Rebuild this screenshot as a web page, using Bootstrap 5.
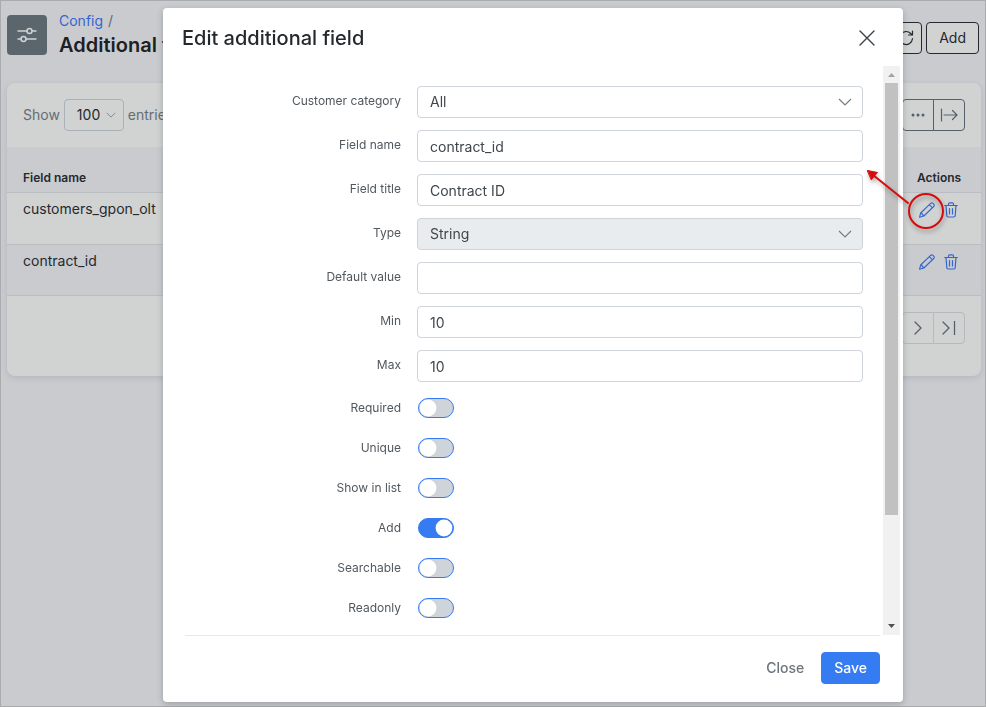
<!DOCTYPE html>
<html lang="en">
<head>
<meta charset="utf-8">
<meta name="viewport" content="width=device-width, initial-scale=1">
<title>Additional fields</title>
<link href="https://cdn.jsdelivr.net/npm/bootstrap@5.3.0/dist/css/bootstrap.min.css" rel="stylesheet">
<style>
body{font-family:Inter,"Liberation Sans",sans-serif;font-size:14px;line-height:20px;color:#25292e;background:#c9cbcf}
svg{display:block;fill:none;stroke:currentColor;stroke-linecap:round;stroke-linejoin:round}
.page{min-height:100vh;border:1px solid #a9abac;padding:14px 4px 16px 6px;overflow:hidden}
.page-icon{width:40px;height:40px;background:#5b656c;color:#d1d3d2;border-radius:4px}
.crumbs{--bs-breadcrumb-divider-color:#5f686f;--bs-breadcrumb-item-padding-x:5px;margin:-4px 0 2px;font-size:14px}
.crumbs a{color:#3565cf}
.page-title{font-size:20px;line-height:24px;font-weight:600;color:#1c1f24}
.top-actions{margin-top:7px;padding-right:2px}
.btn{font-size:14px;line-height:20px;padding:5px 12px;border-radius:4px}
.btn-top{--bs-btn-color:#25292e;--bs-btn-border-color:#25292e;background:#d1d3d2}
.btn-square{width:32px;height:32px;padding:0;display:flex;align-items:center;justify-content:center}
.btn-tool{--bs-btn-color:#56606a;--bs-btn-border-color:#56606a}
.btn-pager{--bs-btn-color:#56606a;--bs-btn-border-color:#b5babe}
.panel{background:#d1d3d2;border:0;border-radius:8px;margin-top:26px;box-shadow:0 2px 6px rgba(60,70,90,.15);overflow:hidden}
.form-select,.form-control{font-size:14px;line-height:20px;height:32px;padding:5px 12px;border-radius:4px;border-color:#ced4da;color:#3f464c}
.form-select{background-image:url("data:image/svg+xml,%3Csvg xmlns='http://www.w3.org/2000/svg' viewBox='0 0 14 8' fill='none' stroke='%23757d84' stroke-width='1.2'%3E%3Cpath d='M1 1l6 6 6-6'/%3E%3C/svg%3E");background-size:14px 8px;background-position:right 10px center}
.form-select:disabled{background-color:#e9ecef}
.length-select{width:60px;padding:5px 10px 5px 12px;background-color:transparent;border-color:#a9b1b7;color:#25292e;background-size:10px 6px;background-position:right 7px center}
.muted{color:#646d74}
.grid-table{--bs-table-bg:transparent;color:#25292e;margin:0}
.grid-table th{background:#c9cbcf;font-size:12px;line-height:16px;font-weight:600;padding:23px 16px 6px;border-color:#b9bec2}
.grid-table td{padding:6px 16px 4px;height:52px;border-color:#b9bec2}
.grid-table tr.alt td{background:#c9cbcf;height:51px}
.grid-table .col-act{width:80px}
.acts{padding:3px 0 0 1px}
.act{color:#3565cf;display:block}
.overlay{background:none;overflow:hidden}
.dialog{max-width:740px;margin:8px 83px 0 auto}
.sheet{border:0;border-radius:4px;box-shadow:0 2px 6px rgba(40,50,60,.28)}
.sheet-head{height:58px;padding:2px 24px 0 19px}
.sheet-title{font-size:20px;line-height:24px;font-weight:500;color:#25292e}
.x-btn{border:0;background:none;padding:0;color:#3b4146}
.field-list{padding:20px 20px 17px}
.field-row{display:grid;grid-template-columns:218fr 446fr;column-gap:16px;margin-bottom:12px}
.field-row label{font-size:12px;line-height:30px;color:#51585e;text-align:right}
.switch-row{align-items:center;height:20px;margin-bottom:20px}
.switch-row.first{margin-top:16px}
.switch-row:last-child{margin-bottom:0}
.switch-row label{line-height:20px}
.switch-row .form-check{padding:0 0 0 1px;margin:0;min-height:0}
.form-switch .form-check-input{float:none;display:block;width:36px;height:20px;margin:0;border-color:#357bf2;background-color:#ced4da;background-size:18px 18px;background-position:left 0 center;background-image:url("data:image/svg+xml,%3Csvg xmlns='http://www.w3.org/2000/svg' viewBox='0 0 18 18'%3E%3Ccircle cx='9' cy='9' r='8.4' fill='%23fff'/%3E%3C/svg%3E")}
.form-switch .form-check-input:checked{background-color:#357bf2;background-position:right 0 center;background-image:url("data:image/svg+xml,%3Csvg xmlns='http://www.w3.org/2000/svg' viewBox='0 0 18 18'%3E%3Ccircle cx='9' cy='9' r='8.4' fill='%23fff'/%3E%3C/svg%3E")}
.track{width:17px;margin-right:3px;background:#f1f1f1}
.track svg{width:17px;height:17px;stroke:none}
.thumb{width:13px;flex:432 0 0;background:#c1c1c1}
.track-rest{flex:103 0 0}
.sheet-foot{border-top:1px solid #e6e8ea;margin:0 23px 0 22px;padding:16px 0 18px}
.btn-save{--bs-btn-bg:#357bf2;--bs-btn-border-color:#357bf2;font-weight:500}
.btn-close-text{--bs-btn-color:#6c757d;font-weight:500;margin-right:4px}
.note{position:absolute;left:858px;top:160px;z-index:1060;pointer-events:none;stroke:#d60b0b;filter:drop-shadow(1px 3px 2px rgba(0,0,0,.3))}
</style>
<script src="https://cdn.jsdelivr.net/npm/bootstrap@5.3.0/dist/js/bootstrap.bundle.min.js"></script>
</head>
<body>
<main class="page">
  <header class="d-flex align-items-start">
    <div class="page-icon d-flex align-items-center justify-content-center me-2">
      <svg width="20" height="18" viewBox="0 0 20 18" stroke-width="1.5"><path d="M1 5h9M15.500 5H19M1 13h3M9 13h10"/><circle cx="12.500" cy="5" r="2.500"/><circle cx="6.500" cy="13" r="2.500"/></svg>
    </div>
    <div class="ms-1">
      <nav aria-label="breadcrumb"><ol class="breadcrumb crumbs"><li class="breadcrumb-item"><a href="#" class="text-decoration-none">Config</a></li><li class="breadcrumb-item" aria-hidden="true"></li></ol></nav>
      <h1 class="page-title m-0">Additional fields</h1>
    </div>
    <div class="d-flex gap-1 ms-auto top-actions">
      <button class="btn btn-top btn-square" aria-label="Refresh"><svg width="18" height="18" viewBox="0 0 18 18" stroke-width="1.200"><path d="M15.500 9.500A6.500 6.500 0 1 1 13.700 4.500L15 5.500M15.500 2v4H11.500"/></svg></button>
      <button class="btn btn-top">Add</button>
    </div>
  </header>

  <section class="card panel">
    <div class="d-flex align-items-center p-3">
      <label for="len" class="muted me-1">Show</label>
      <select id="len" class="form-select length-select me-1"><option>100</option></select>
      <span class="muted">entries</span>
      <div class="btn-group ms-auto">
        <button class="btn btn-tool btn-square" aria-label="More"><svg width="16" height="4" viewBox="0 0 16 4" stroke="none"><g fill="#56606a" stroke="none"><circle cx="3" cy="2" r="1.500"/><circle cx="8" cy="2" r="1.500"/><circle cx="13" cy="2" r="1.500"/></g></svg></button>
        <button class="btn btn-tool btn-square" aria-label="Export"><svg width="18" height="14" viewBox="0 0 18 14" stroke-width="1.200"><path d="M1.500 1v12M4 7h13M12.500 2.500L17 7l-4.500 4.500"/></svg></button>
      </div>
    </div>
    <table class="table grid-table">
      <thead><tr><th>Field name</th><th class="col-act">Actions</th></tr></thead>
      <tbody>
        <tr><td>customers_gpon_olt</td><td><div class="d-flex gap-2 acts">
          <a href="#" class="act" aria-label="Edit"><svg width="18" height="16" viewBox="0 0 18 16" stroke-width="1.100"><path d="M1.500 15.300l1.200-4.300L12.600 1.400a1.700 1.700 0 0 1 2.400 0l.7.7a1.700 1.700 0 0 1 0 2.400L5.900 14zM11.300 2.700l3 3M2.700 11l1.300.4.400 1.500 1.500.3"/></svg></a>
          <a href="#" class="act" aria-label="Delete"><svg width="14" height="16" viewBox="0 0 14 16" stroke-width="1.200"><path d="M.7 3.500h12.600M2 3.500l.8 10a1.500 1.500 0 0 0 1.400 1.500h5.600a1.500 1.500 0 0 0 1.400-1.500l.8-10M4.500 3.500V2A1.200 1.200 0 0 1 5.700.8h2.600A1.200 1.200 0 0 1 9.500 2v1.500M5.500 6.500v5.500M8.500 6.500v5.500"/></svg></a></div></td></tr>
        <tr class="alt"><td>contract_id</td><td><div class="d-flex gap-2 acts">
          <a href="#" class="act" aria-label="Edit"><svg width="18" height="16" viewBox="0 0 18 16" stroke-width="1.100"><path d="M1.500 15.300l1.200-4.300L12.600 1.400a1.700 1.700 0 0 1 2.400 0l.7.7a1.700 1.700 0 0 1 0 2.400L5.900 14zM11.300 2.700l3 3M2.700 11l1.300.4.400 1.500 1.500.3"/></svg></a>
          <a href="#" class="act" aria-label="Delete"><svg width="14" height="16" viewBox="0 0 14 16" stroke-width="1.200"><path d="M.7 3.500h12.600M2 3.500l.8 10a1.500 1.500 0 0 0 1.400 1.500h5.600a1.500 1.500 0 0 0 1.400-1.500l.8-10M4.500 3.500V2A1.200 1.200 0 0 1 5.700.8h2.600A1.200 1.200 0 0 1 9.500 2v1.500M5.500 6.500v5.500M8.500 6.500v5.500"/></svg></a></div></td></tr>
      </tbody>
    </table>
    <div class="d-flex justify-content-end px-3 pt-3 pb-4 mb-2">
      <div class="btn-group">
        <button class="btn btn-pager btn-square" aria-label="Next page"><svg width="8" height="14" viewBox="0 0 8 14" stroke-width="1.300"><path d="M1 1l6 6-6 6"/></svg></button>
        <button class="btn btn-pager btn-square" aria-label="Last page"><svg width="14" height="14" viewBox="0 0 14 14" stroke-width="1.300"><path d="M1 1l6 6-6 6M12.500 0v14"/></svg></button>
      </div>
    </div>
  </section>
</main>

<div class="modal d-block overlay" role="dialog" aria-labelledby="dlg">
  <div class="modal-dialog dialog">
    <div class="modal-content sheet">
      <div class="sheet-head d-flex align-items-center justify-content-between">
        <h2 id="dlg" class="sheet-title m-0">Edit additional field</h2>
        <button class="x-btn" aria-label="Close dialog"><svg width="24" height="24" viewBox="0 0 24 24" stroke-width="1.400"><path d="M5 5l14 14M19 5L5 19"/></svg></button>
      </div>
      <div class="d-flex">
        <form class="field-list flex-grow-1">
          <div class="field-row"><label for="cat">Customer category</label><select id="cat" class="form-select"><option>All</option></select></div>
          <div class="field-row"><label for="fname">Field name</label><input id="fname" class="form-control" value="contract_id"></div>
          <div class="field-row"><label for="ftitle">Field title</label><input id="ftitle" class="form-control" value="Contract ID"></div>
          <div class="field-row"><label for="ftype">Type</label><select id="ftype" class="form-select" disabled><option>String</option></select></div>
          <div class="field-row"><label for="fdef">Default value</label><input id="fdef" class="form-control"></div>
          <div class="field-row"><label for="fmin">Min</label><input id="fmin" class="form-control" value="10"></div>
          <div class="field-row"><label for="fmax">Max</label><input id="fmax" class="form-control" value="10"></div>
          <div class="field-row switch-row first"><label for="s1">Required</label><div class="form-check form-switch"><input id="s1" class="form-check-input" type="checkbox" role="switch"></div></div>
          <div class="field-row switch-row"><label for="s2">Unique</label><div class="form-check form-switch"><input id="s2" class="form-check-input" type="checkbox" role="switch"></div></div>
          <div class="field-row switch-row"><label for="s3">Show in list</label><div class="form-check form-switch"><input id="s3" class="form-check-input" type="checkbox" role="switch"></div></div>
          <div class="field-row switch-row"><label for="s4">Add</label><div class="form-check form-switch"><input id="s4" class="form-check-input" type="checkbox" role="switch" checked></div></div>
          <div class="field-row switch-row"><label for="s5">Searchable</label><div class="form-check form-switch"><input id="s5" class="form-check-input" type="checkbox" role="switch"></div></div>
          <div class="field-row switch-row"><label for="s6">Readonly</label><div class="form-check form-switch"><input id="s6" class="form-check-input" type="checkbox" role="switch"></div></div>
        </form>
        <div class="track d-flex flex-column align-items-center" aria-hidden="true">
          <svg viewBox="0 0 17 17"><path fill="#a3a3a3" d="M5 11h7L8.500 7z"/></svg>
          <div class="thumb"></div><div class="track-rest"></div>
          <svg viewBox="0 0 17 17"><path fill="#505050" d="M5 6h7l-3.500 4z"/></svg>
        </div>
      </div>
      <div class="sheet-foot d-flex justify-content-end">
        <button class="btn btn-close-text">Close</button>
        <button class="btn btn-primary btn-save">Save</button>
      </div>
    </div>
  </div>
</div>
<svg class="note" width="92" height="74" viewBox="0 0 92 74" aria-hidden="true"><circle cx="68" cy="51" r="17" stroke-width="2"/><path d="M50 43L15 15" stroke-width="2"/><path d="M9.500 10.500l10 2-6 7z" fill="#d60b0b" stroke-width="1"/></svg>
</body>
</html>
